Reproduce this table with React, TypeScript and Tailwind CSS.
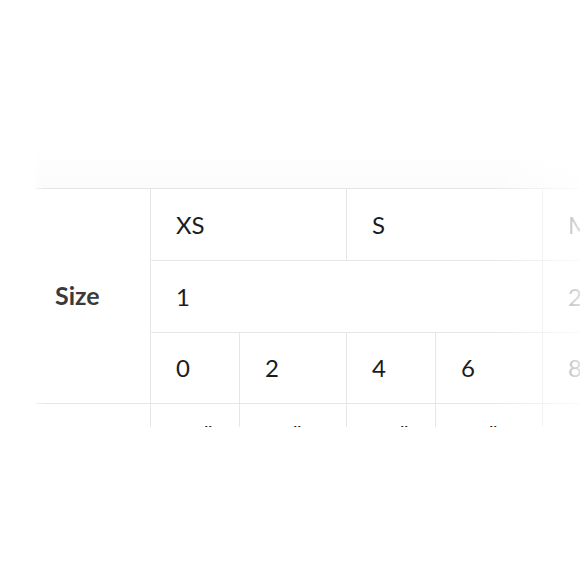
const font = { fontFamily: "Lato, 'Open Sans', sans-serif" };

const cell = "flex items-center pl-[25px] border-l border-t border-[#e6e6e6] text-[24px] text-[#1c1c1c]";

export default function App() {
  const bust = ["32", "33", "34", "35", "36"];

  return (
    <div className="w-[580px] h-[580px] bg-white overflow-hidden" style={font}>
      <div className="pt-[150px]">
        <div className="relative h-[277px] overflow-hidden pl-[35px]">
          {/* faded header strip above the table */}
          <div className="h-[38px] bg-gradient-to-b from-white to-[#fbfbfb]" />

          {/* size table */}
          <div className="grid grid-cols-[115px_89px_107px_89px_107px_120px] grid-rows-[72px_72px_71px_72px] w-max">
            <div className="row-span-3 flex items-center pl-[20px] border-t border-[#e6e6e6] text-[25px] font-bold text-[#3a3a3a]">
              Size
            </div>
            <div className={`${cell} col-span-2`}>XS</div>
            <div className={`${cell} col-span-2`}>S</div>
            <div className={cell}>M</div>

            <div className={`${cell} col-span-4`}>1</div>
            <div className={cell}>2</div>

            <div className={cell}>0</div>
            <div className={cell}>2</div>
            <div className={cell}>4</div>
            <div className={cell}>6</div>
            <div className={cell}>8</div>

            <div className="border-t border-[#e6e6e6]" />
            {bust.map((b) => (
              <div key={b} className={`${cell} pt-[8px]`}>
                <span>
                  {b}
                  <span className="align-[20px]">"</span>
                </span>
              </div>
            ))}
          </div>

          {/* edge fades */}
          <div className="absolute left-[30px] top-0 bottom-0 w-[14px] bg-gradient-to-r from-white to-transparent" />
          <div className="absolute right-0 top-0 bottom-0 w-[88px] bg-gradient-to-r from-white/0 to-white/85" />
        </div>
      </div>
    </div>
  );
}
